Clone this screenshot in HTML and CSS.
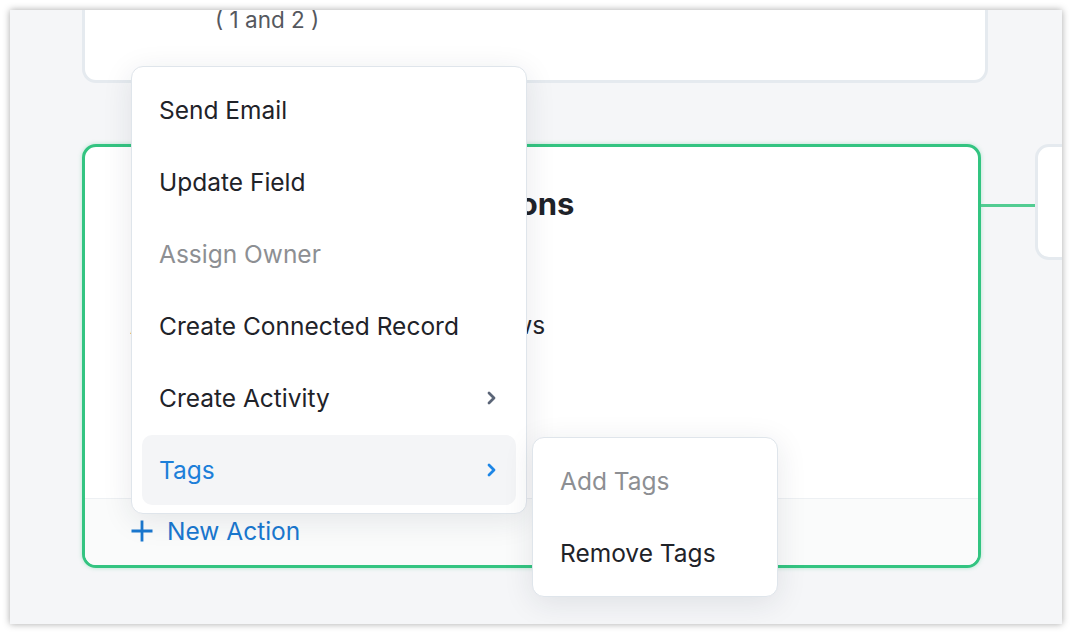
FILE: index.html
```html
<!DOCTYPE html>
<html lang="en">
<head>
    <meta charset="UTF-8">
    <meta name="viewport" content="width=device-width, initial-scale=1.0">
    <title>Workflow Actions</title>
    <link rel="stylesheet" href="styles.css">
</head>
<body>
    <div class="frame">
        <div class="criteria-card">
            <div class="criteria-pattern">( 1 and 2 )</div>
        </div>

        <div class="flow-row">
            <div class="action-card">
                <div class="action-body">
                    <h2 class="action-title">Execute the following actions</h2>
                    <p class="action-note">Add selected tags to matching rows</p>
                </div>
                <div class="action-footer">
                    <svg class="plus-icon" width="24" height="24" viewBox="0 0 24 24">
                        <path d="M12 1.5v21M1.5 12h21" stroke="currentColor" stroke-width="2.8" fill="none"/>
                    </svg>
                    <span>New Action</span>
                </div>
            </div>
            <div class="connector"></div>
            <div class="next-card"></div>
        </div>

        <ul class="menu action-menu">
            <li class="menu-item">Send Email</li>
            <li class="menu-item">Update Field</li>
            <li class="menu-item disabled">Assign Owner</li>
            <li class="menu-item">Create Connected Record</li>
            <li class="menu-item">Create Activity
                <svg class="chevron" width="12" height="16" viewBox="0 0 12 16"><path d="M3 3l5 5-5 5" stroke="currentColor" stroke-width="2.8" fill="none" stroke-linecap="round" stroke-linejoin="round"/></svg>
            </li>
            <li class="menu-item active">Tags
                <svg class="chevron" width="12" height="16" viewBox="0 0 12 16"><path d="M3 3l5 5-5 5" stroke="currentColor" stroke-width="2.8" fill="none" stroke-linecap="round" stroke-linejoin="round"/></svg>
            </li>
        </ul>

        <ul class="menu tags-menu">
            <li class="menu-item disabled">Add Tags</li>
            <li class="menu-item">Remove Tags</li>
        </ul>
    </div>
</body>
</html>
```

FILE: styles.css
```css
body {
    margin: 0;
    background-color: #fff;
    font-family: Inter, "Noto Sans", sans-serif;
}
.frame {
    position: relative;
    margin: 10px;
    width: 1052px;
    height: 614px;
    background-color: #f5f6f8;
    box-shadow: 0 0 7px rgba(0, 0, 0, 0.35);
    overflow: hidden;
    padding-left: 72px;
    box-sizing: border-box;
}
.criteria-card {
    width: 906px;
    height: 113px;
    margin-top: -40px;
    box-sizing: border-box;
    background-color: #fff;
    border: 3px solid #e5eaef;
    border-radius: 14px;
    padding: 38px 0 0 130px;
}
.criteria-pattern {
    font-size: 22.5px;
    color: #55585e;
    line-height: 18px;
}
.flow-row {
    display: flex;
    align-items: flex-start;
    margin-top: 61px;
}
.action-card {
    width: 899px;
    height: 424px;
    flex-shrink: 0;
    box-sizing: border-box;
    border: 3px solid #33c481;
    border-radius: 14px;
    background-color: #fff;
    box-shadow: 0 0 4px rgba(51, 196, 129, 0.35);
    display: flex;
    flex-direction: column;
    overflow: hidden;
}
.action-body {
    flex: 1;
    padding: 38px 0 0 45px;
}
.action-title {
    margin: 0;
    font-size: 31px;
    line-height: 38px;
    font-weight: 700;
    color: #1f2329;
}
.action-note {
    margin: 87px 0 0;
    font-size: 24.5px;
    line-height: 30px;
    color: #1f2329;
}
.action-footer {
    height: 67px;
    border-top: 1px solid #edf0f3;
    background-color: #fafbfb;
    display: flex;
    align-items: center;
    gap: 13px;
    padding-left: 45px;
    color: #1a78d0;
    font-size: 24.5px;
    padding-bottom: 2px;
    box-sizing: border-box;
}
.connector {
    width: 54px;
    height: 3px;
    margin-top: 60px;
    flex-shrink: 0;
    background-color: #52cc92;
}
.next-card {
    width: 200px;
    height: 116px;
    flex-shrink: 0;
    box-sizing: border-box;
    border: 3px solid #e5eaef;
    border-radius: 14px;
    background-color: #fff;
}
.menu {
    position: absolute;
    list-style: none;
    margin: 0;
    padding: 8px 10px;
    background-color: #fff;
    border: 1px solid #dfe5eb;
    border-radius: 12px;
    box-shadow: 0 6px 30px rgba(30, 40, 60, 0.1);
    display: flex;
    flex-direction: column;
    gap: 2px;
}
.action-menu {
    left: 121px;
    top: 56px;
    width: 396px;
    box-sizing: border-box;
}
.tags-menu {
    left: 522px;
    top: 427px;
    width: 246px;
    box-sizing: border-box;
}
.menu-item {
    height: 70px;
    padding: 0 18px 0 17px;
    display: flex;
    align-items: center;
    justify-content: space-between;
    border-radius: 10px;
    font-size: 24.5px;
    color: #1f2329;
}
.menu-item.disabled {
    color: #8d8f93;
}
.menu-item.active {
    background-color: #f4f5f7;
    color: #1d7fd9;
}
.chevron {
    color: #5b6577;
}
.menu-item.active .chevron {
    color: #1d86e6;
}
```
